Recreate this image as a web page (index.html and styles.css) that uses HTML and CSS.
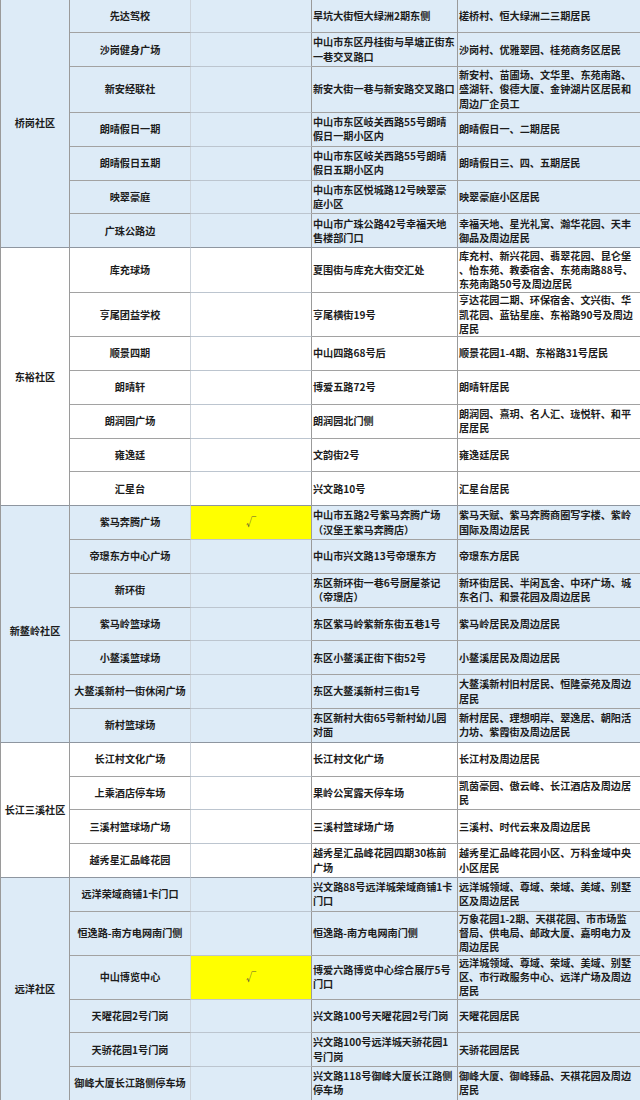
FILE: index.html
```html
<!DOCTYPE html>
<html lang="zh-CN">
<head>
<meta charset="utf-8">
<title>核酸采样点</title>
<link rel="stylesheet" href="styles.css">
</head>
<body>
<table class="sheet">
  <colgroup>
    <col class="w1"><col class="w2"><col class="w3"><col class="w4"><col class="w5">
  </colgroup>
  <tbody class="blue">
    <tr class="first">
      <td class="c" rowspan="7">桥岗社区</td>
      <td class="n">先达驾校</td><td class="k"></td>
      <td class="a">旱坑大街恒大绿洲2期东侧</td>
      <td class="r">槎桥村、恒大绿洲二三期居民</td>
    </tr>
    <tr>
      <td class="n">沙岗健身广场</td><td class="k"></td>
      <td class="a">中山市东区丹桂街与旱塘正街东<br>一巷交叉路口</td>
      <td class="r">沙岗村、优雅翠园、桂苑商务区居民</td>
    </tr>
    <tr class="t46">
      <td class="n">新安经联社</td><td class="k"></td>
      <td class="a">新安大街一巷与新安路交叉路口</td>
      <td class="r">新安村、苗圃场、文华里、东苑南路、<br>盛湖轩、俊德大厦、金钟湖片区居民和<br>周边厂企员工</td>
    </tr>
    <tr>
      <td class="n">朗晴假日一期</td><td class="k"></td>
      <td class="a">中山市东区岐关西路55号朗晴<br>假日一期小区内</td>
      <td class="r">朗晴假日一、二期居民</td>
    </tr>
    <tr>
      <td class="n">朗晴假日五期</td><td class="k"></td>
      <td class="a">中山市东区岐关西路55号朗晴<br>假日五期小区内</td>
      <td class="r">朗晴假日三、四、五期居民</td>
    </tr>
    <tr>
      <td class="n">映翠豪庭</td><td class="k"></td>
      <td class="a">中山市东区悦城路12号映翠豪<br>庭小区</td>
      <td class="r">映翠豪庭小区居民</td>
    </tr>
    <tr class="last">
      <td class="n">广珠公路边</td><td class="k"></td>
      <td class="a">中山市广珠公路42号幸福天地<br>售楼部门口</td>
      <td class="r">幸福天地、星光礼寓、瀚华花园、天丰<br>御品及周边居民</td>
    </tr>
  </tbody>
  <tbody class="white">
    <tr class="t45">
      <td class="c" rowspan="7">东裕社区</td>
      <td class="n">库充球场</td><td class="k"></td>
      <td class="a">夏围街与库充大街交汇处</td>
      <td class="r">库充村、新兴花园、翡翠花园、昆仑堡<br>、怡东苑、教委宿舍、东苑南路88号、<br>东苑南路50号及周边居民</td>
    </tr>
    <tr class="t43">
      <td class="n">亨尾团益学校</td><td class="k"></td>
      <td class="a">亨尾横街19号</td>
      <td class="r">亨达花园二期、环保宿舍、文兴街、华<br>凯花园、蓝钻星座、东裕路90号及周边<br>居民</td>
    </tr>
    <tr>
      <td class="n">顺景四期</td><td class="k"></td>
      <td class="a">中山四路68号后</td>
      <td class="r">顺景花园1-4期、东裕路31号居民</td>
    </tr>
    <tr>
      <td class="n">朗晴轩</td><td class="k"></td>
      <td class="a">博爱五路72号</td>
      <td class="r">朗晴轩居民</td>
    </tr>
    <tr>
      <td class="n">朗润园广场</td><td class="k"></td>
      <td class="a">朗润园北门侧</td>
      <td class="r">朗润园、熹玥、名人汇、珑悦轩、和平<br>居居民</td>
    </tr>
    <tr>
      <td class="n">雍逸廷</td><td class="k"></td>
      <td class="a">文韵街2号</td>
      <td class="r">雍逸廷居民</td>
    </tr>
    <tr class="last">
      <td class="n">汇星台</td><td class="k"></td>
      <td class="a">兴文路10号</td>
      <td class="r">汇星台居民</td>
    </tr>
  </tbody>
  <tbody class="blue">
    <tr>
      <td class="c low" rowspan="7">新鳌岭社区</td>
      <td class="n">紫马奔腾广场</td><td class="k yes">√</td>
      <td class="a">中山市五路2号紫马奔腾广场<br>（汉堡王紫马奔腾店）</td>
      <td class="r">紫马天赋、紫马奔腾商圈写字楼、紫岭<br>国际及周边居民</td>
    </tr>
    <tr>
      <td class="n">帝璟东方中心广场</td><td class="k"></td>
      <td class="a">中山市兴文路13号帝璟东方</td>
      <td class="r">帝璟东方居民</td>
    </tr>
    <tr>
      <td class="n">新环街</td><td class="k"></td>
      <td class="a">东区新环街一巷6号厨屋茶记<br>（帝璟店）</td>
      <td class="r">新环街居民、半闲瓦舍、中环广场、城<br>东名门、和景花园及周边居民</td>
    </tr>
    <tr>
      <td class="n">紫马岭篮球场</td><td class="k"></td>
      <td class="a">东区紫马岭紫新东街五巷1号</td>
      <td class="r">紫马岭居民及周边居民</td>
    </tr>
    <tr>
      <td class="n">小鳌溪篮球场</td><td class="k"></td>
      <td class="a">东区小鳌溪正街下街52号</td>
      <td class="r">小鳌溪居民及周边居民</td>
    </tr>
    <tr>
      <td class="n">大鳌溪新村一街休闲广场</td><td class="k"></td>
      <td class="a">东区大鳌溪新村三街1号</td>
      <td class="r">大鳌溪新村旧村居民、恒隆豪苑及周边<br>居民</td>
    </tr>
    <tr class="last">
      <td class="n">新村篮球场</td><td class="k"></td>
      <td class="a">东区新村大街65号新村幼儿园<br>对面</td>
      <td class="r">新村居民、理想明岸、翠逸居、朝阳活<br>力坊、紫霞街及周边居民</td>
    </tr>
  </tbody>
  <tbody class="white">
    <tr>
      <td class="c" rowspan="4">长江三溪社区</td>
      <td class="n">长江村文化广场</td><td class="k"></td>
      <td class="a">长江村文化广场</td>
      <td class="r">长江村及周边居民</td>
    </tr>
    <tr>
      <td class="n">上乘酒店停车场</td><td class="k"></td>
      <td class="a">果岭公寓露天停车场</td>
      <td class="r">凯茵豪园、傲云峰、长江酒店及周边居<br>民</td>
    </tr>
    <tr>
      <td class="n">三溪村篮球场广场</td><td class="k"></td>
      <td class="a">三溪村篮球场广场</td>
      <td class="r">三溪村、时代云来及周边居民</td>
    </tr>
    <tr class="last">
      <td class="n">越秀星汇品峰花园</td><td class="k"></td>
      <td class="a">越秀星汇品峰花园四期30栋前<br>广场</td>
      <td class="r">越秀星汇品峰花园小区、万科金域中央<br>小区居民</td>
    </tr>
  </tbody>
  <tbody class="blue">
    <tr>
      <td class="c" rowspan="6">远洋社区</td>
      <td class="n">远洋荣域商铺1卡门口</td><td class="k"></td>
      <td class="a">兴文路88号远洋城荣域商铺1卡<br>门口</td>
      <td class="r">远洋城领域、尊域、荣域、美域、别墅<br>区及周边居民</td>
    </tr>
    <tr class="t42">
      <td class="n">恒逸路-南方电网南门侧</td><td class="k"></td>
      <td class="a">恒逸路-南方电网南门侧</td>
      <td class="r">万象花园1-2期、天祺花园、市市场监<br>督局、供电局、邮政大厦、嘉明电力及<br>周边居民</td>
    </tr>
    <tr class="t43">
      <td class="n">中山博览中心</td><td class="k yes">√</td>
      <td class="a">博爱六路博览中心综合展厅5号<br>门口</td>
      <td class="r">远洋城领域、尊域、荣域、美域、别墅<br>区、市行政服务中心、远洋广场及周边<br>居民</td>
    </tr>
    <tr>
      <td class="n">天曜花园2号门岗</td><td class="k"></td>
      <td class="a">兴文路100号天曜花园2号门岗</td>
      <td class="r">天曜花园居民</td>
    </tr>
    <tr>
      <td class="n">天骄花园1号门岗</td><td class="k"></td>
      <td class="a">兴文路100号远洋城天骄花园1<br>号门岗</td>
      <td class="r">天骄花园居民</td>
    </tr>
    <tr class="last">
      <td class="n">御峰大厦长江路侧停车场</td><td class="k"></td>
      <td class="a">兴文路118号御峰大厦长江路侧<br>停车场</td>
      <td class="r">御峰大厦、御峰臻品、天祺花园及周边<br>居民</td>
    </tr>
  </tbody>
</table>
</body>
</html>
```
FILE: styles.css
```css
html, body {
  margin: 0;
  padding: 0;
  background: #ffffff;
  overflow: hidden;
}

.sheet {
  border-collapse: separate;
  border-spacing: 0;
  table-layout: fixed;
  width: 648px;
  font-family: "Noto Sans CJK SC", "Noto Sans", sans-serif;
  font-size: 10.15px;
  font-weight: 700;
  line-height: 14.3px;
  color: #1c1c1c;
}

.w1 { width: 70px; }
.w2 { width: 121px; }
.w3 { width: 121px; }
.w4 { width: 146px; }
.w5 { width: 190px; }

.sheet tr { height: 33.8px; }
.sheet tr.first { height: 33.3px; }
.sheet tr.t46 { height: 46px; }
.sheet tr.t45 { height: 45px; }
.sheet tr.t43 { height: 43.2px; }
.sheet tr.t42 { height: 42.3px; }

.sheet td {
  box-sizing: border-box;
  padding: 0 1px;
  border-right: 1px solid #9a9a9a;
  border-bottom: 1px solid #a2a2a2;
  vertical-align: middle;
  white-space: nowrap;
  overflow: hidden;
}

.blue td { background: #ddebf7; }
.white td { background: #ffffff; }

.sheet td.c {
  border-left: 1px solid #9a9a9a;
  border-bottom-color: #8e96a0;
  text-align: center;
}

.sheet td.c.low { padding-top: 15px; }

.sheet td.n {
  text-align: center;
  border-right-color: #cdd4dc;
}

.sheet td.k {
  text-align: center;
  border-bottom-color: #bcc5cf;
  font-weight: 400;
  color: #5a5a3a;
}

.sheet td.k.yes { background: #ffff00; }

.sheet tr.last td { border-bottom-color: #8e96a0; }

.sheet td.a,
.sheet td.r { text-align: left; }
```
